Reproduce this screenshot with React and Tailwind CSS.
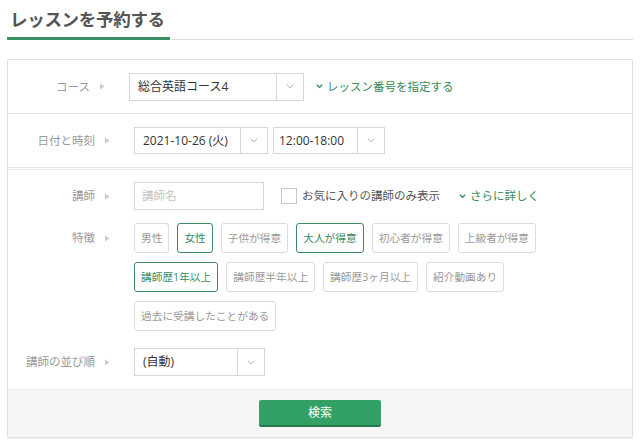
import React from 'react';

const Tri = () => (
    <svg width="5" height="7" viewBox="0 0 5 7" className="ml-[10px] shrink-0">
        <path d="M0 0.5 L4.5 3.5 L0 6.5 Z" fill="#cbcbcb" />
    </svg>
);

const Chevron = ({ color = '#aaa', w = 8, sw = 1 }) => (
    <svg width={w} height={w * 0.6} viewBox="0 0 8 5">
        <path d="M0.8 0.8 L4 4 L7.2 0.8" fill="none" stroke={color} strokeWidth={sw} />
    </svg>
);

// ラベル列
const Label = ({ text, w = 'w-[126px]', pr = 'pr-[24px]' }) => (
    <div className={`${w} ${pr} shrink-0 flex items-center justify-end text-[11.5px] text-[#999]`}>
        <span>{text}</span>
        <Tri />
    </div>
);

const Select = ({ value, w, h = 'h-[28px]', pl = 'pl-[8px]' }) => (
    <div className={`${w} ${h} flex border border-[#d6d6d6] bg-white`}>
        <div className={`flex-1 flex items-center ${pl} text-[12px] text-[#333]`}>{value}</div>
        <div className="w-[27px] flex items-center justify-center border-l border-[#d6d6d6]">
            <Chevron />
        </div>
    </div>
);

const Tag = ({ text, on }) => (
    <div
        className={`h-[30px] flex items-center px-[6px] rounded-[3px] border text-[10.7px] ${
            on ? 'border-[#3e8c5f] text-[#3e8c5f]' : 'border-[#dcdcdc] text-[#999]'
        }`}
    >
        {text}
    </div>
);

export default function App() {
    const tags1 = [
        ['男性', false],
        ['女性', true],
        ['子供が得意', false],
        ['大人が得意', true],
        ['初心者が得意', false],
        ['上級者が得意', false],
    ];
    const tags2 = [
        ['講師歴1年以上', true],
        ['講師歴半年以上', false],
        ['講師歴3ヶ月以上', false],
        ['紹介動画あり', false],
    ];

    return (
        <div
            className="w-[640px] h-[445px] bg-white pt-[4px] px-[7px] overflow-hidden"
            style={{ fontFamily: '"Open Sans", "Noto Sans CJK JP", sans-serif' }}
        >
            {/* 見出し */}
            <div className="border-b border-[#dedede] h-[36px]">
                <h1 className="inline-block w-[163px] h-[36px] pl-[3px] border-b-[3px] border-[#3c8f62] rounded-b-[1px] text-[17.5px] leading-[30px] font-bold text-[#555] tracking-[-0.3px]">
                    レッスンを予約する
                </h1>
            </div>

            {/* フォーム */}
            <div className="mt-[19px] w-[626px] border border-[#e2e2e2] rounded-[2px] shadow-[0_1px_1px_rgba(0,0,0,0.05)]">
                <div className="h-[54px] flex items-center border-b border-[#e4e4e4]">
                    <Label text="コース" w="w-[121px]" pr="pr-[24px]" />
                    <Select value="総合英語コース4" w="w-[175px]" />
                    <div className="ml-[12px] flex items-center text-[11.5px] text-[#3a8a5b]">
                        <Chevron color="#3a8a5b" w={7} sw={1.6} />
                        <span className="ml-[4px]">レッスン番号を指定する</span>
                    </div>
                </div>

                <div className="h-[54px] flex items-center border-b border-[#e4e4e4]">
                    <Label text="日付と時刻" />
                    <Select value="2021-10-26 (火)" w="w-[134px]" h="h-[27px]" />
                    <div className="ml-[5px]">
                        <Select value="12:00-18:00" w="w-[112px]" h="h-[27px]" pl="pl-[5px]" />
                    </div>
                </div>

                <div className="mt-[1px] border-t border-[#ececec] pt-[12px] pb-[13px]">
                    <div className="flex items-center h-[28px]">
                        <Label text="講師" />
                        <div className="w-[130px] h-[28px] border border-[#d6d6d6] flex items-center pl-[7px] text-[11.5px] text-[#c4c4c4]">
                            講師名
                        </div>
                        <div className="ml-[17px] w-[16px] h-[16px] border border-[#c8c8c8] bg-white" />
                        <span className="ml-[5px] text-[11.5px] text-[#555]">お気に入りの講師のみ表示</span>
                        <div className="ml-[19px] flex items-center text-[11.5px] text-[#3a8a5b]">
                            <Chevron color="#3a8a5b" w={7} sw={1.6} />
                            <span className="ml-[4px]">さらに詳しく</span>
                        </div>
                    </div>

                    <div className="flex items-start mt-[13px]">
                        <div className="h-[30px] flex">
                            <Label text="特徴" />
                        </div>
                        <div className="flex flex-col gap-[9px]">
                            <div className="flex gap-[8px]">
                                {tags1.map(([t, on]) => (
                                    <Tag key={t} text={t} on={on} />
                                ))}
                            </div>
                            <div className="flex gap-[8px]">
                                {tags2.map(([t, on]) => (
                                    <Tag key={t} text={t} on={on} />
                                ))}
                            </div>
                            <div className="flex gap-[8px]">
                                <Tag text="過去に受講したことがある" />
                            </div>
                        </div>
                    </div>

                    <div className="flex items-center mt-[17px]">
                        <Label text="講師の並び順" />
                        <Select value="(自動)" w="w-[131px]" />
                    </div>
                </div>

                <div className="h-[48px] bg-[#f6f6f6] border-t border-[#eeeeee] flex items-start justify-center pt-[10px]">
                    <button className="w-[122px] h-[27px] rounded-[2px] bg-[#33a065] border-b-2 border-[#277a4c] text-white text-[12px]">
                        検索
                    </button>
                </div>
            </div>
        </div>
    );
}
